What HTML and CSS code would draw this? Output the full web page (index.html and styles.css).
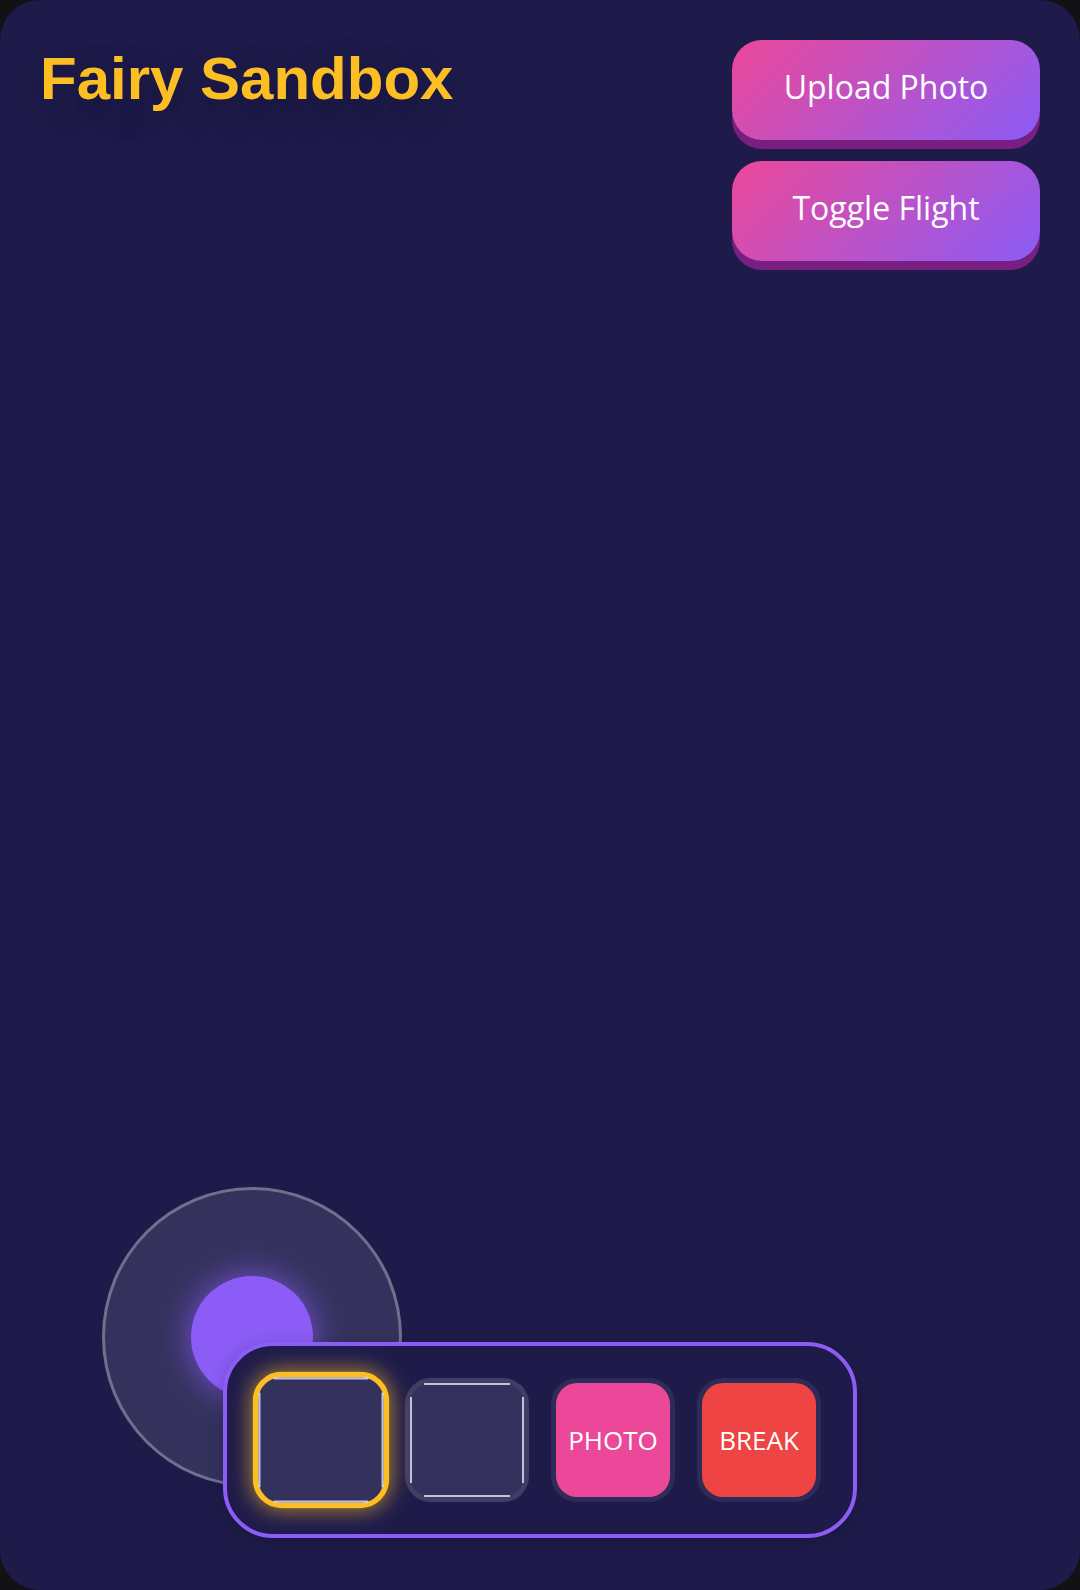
FILE: index.html
```html
<!DOCTYPE html>
<html lang="en">
<head>
<meta charset="utf-8">
<title>Fairy Sandbox</title>
<link rel="stylesheet" href="styles.css">
</head>
<body>
<div class="game">
  <header class="hud-top">
    <h1 class="title">Fairy Sandbox</h1>
    <div class="actions">
      <button class="action-btn">Upload Photo</button>
      <button class="action-btn">Toggle Flight</button>
    </div>
  </header>

  <div class="joystick">
    <div class="joystick-knob"></div>
  </div>

  <div class="hotbar">
    <div class="slot slot-empty slot-selected"></div>
    <div class="slot slot-empty"></div>
    <div class="slot slot-photo">PHOTO</div>
    <div class="slot slot-break">BREAK</div>
  </div>
</div>
</body>
</html>
```
FILE: styles.css
```css
* { box-sizing: border-box; }

html, body {
  margin: 0;
  padding: 0;
  background: #121214;
}

.game {
  position: relative;
  width: 1080px;
  height: 1590px;
  background: #1e1b4b;
  border-radius: 40px;
  overflow: hidden;
  font-family: "Open Sans", "Noto Sans", sans-serif;
}

.hud-top {
  display: flex;
  justify-content: space-between;
  align-items: flex-start;
  padding: 40px 40px 0 40px;
}

.title {
  margin: 0;
  margin-top: 4px;
  font-family: "Liberation Sans", Arial, sans-serif;
  font-weight: bold;
  font-size: 60px;
  line-height: 1.15;
  color: #fbbf24;
  text-shadow: 0 12px 40px rgba(0, 0, 0, 0.3);
}

.actions {
  display: flex;
  flex-direction: column;
  gap: 21px;
}

.action-btn {
  width: 308px;
  height: 100px;
  border: none;
  border-radius: 30px;
  background: linear-gradient(135deg, #ec4899 0%, #8b5cf6 100%);
  box-shadow: 0 9px 0 #7a1f82;
  color: #ffffff;
  font-family: "Open Sans", "Noto Sans", sans-serif;
  font-size: 32px;
  font-weight: 400;
  padding: 0 0 7px 0;
}

.joystick {
  position: absolute;
  left: 102px;
  bottom: 103px;
  width: 300px;
  height: 300px;
  border-radius: 50%;
  background: rgba(255, 255, 255, 0.1);
  border: 3px solid rgba(255, 255, 255, 0.3);
  display: flex;
  align-items: center;
  justify-content: center;
}

.joystick-knob {
  width: 122px;
  height: 122px;
  border-radius: 50%;
  background: #8b5cf6;
  box-shadow: 0 0 34px rgba(139, 92, 246, 0.8);
}

.hotbar {
  position: absolute;
  left: 50%;
  bottom: 52px;
  transform: translateX(-50%);
  display: flex;
  gap: 22px;
  padding: 32px;
  border: 4px solid #8b5cf6;
  border-radius: 50px;
  background: #1e1b4b;
  box-shadow: 0 4px 16px rgba(0, 0, 0, 0.2);
}

.slot {
  position: relative;
  width: 124px;
  height: 124px;
  flex: none;
  border: 5px solid rgba(255, 255, 255, 0.06);
  border-radius: 26px;
  background: rgba(255, 255, 255, 0.1);
  display: flex;
  align-items: center;
  justify-content: center;
  color: #ffffff;
  font-family: "Open Sans", "Noto Sans", sans-serif;
  font-size: 26px;
}

.slot-empty::before {
  content: "";
  position: absolute;
  top: 0;
  bottom: 0;
  left: 14px;
  right: 14px;
  border-top: 2px solid rgba(230, 229, 245, 0.8);
  border-bottom: 2px solid rgba(230, 229, 245, 0.8);
}

.slot-empty::after {
  content: "";
  position: absolute;
  top: 14px;
  bottom: 14px;
  left: 0;
  right: 0;
  border-left: 2px solid rgba(230, 229, 245, 0.8);
  border-right: 2px solid rgba(230, 229, 245, 0.8);
}

.slot-selected {
  border: 5px solid #fbbf24;
  transform: scale(1.1);
  box-shadow: 0 0 20px rgba(251, 191, 36, 0.7);
}

.slot-photo {
  background: #ec4899;
  background-clip: padding-box;
  border-color: rgba(255, 255, 255, 0.07);
}

.slot-break {
  background: #ef4444;
  background-clip: padding-box;
  border-color: rgba(255, 255, 255, 0.07);
}
```
